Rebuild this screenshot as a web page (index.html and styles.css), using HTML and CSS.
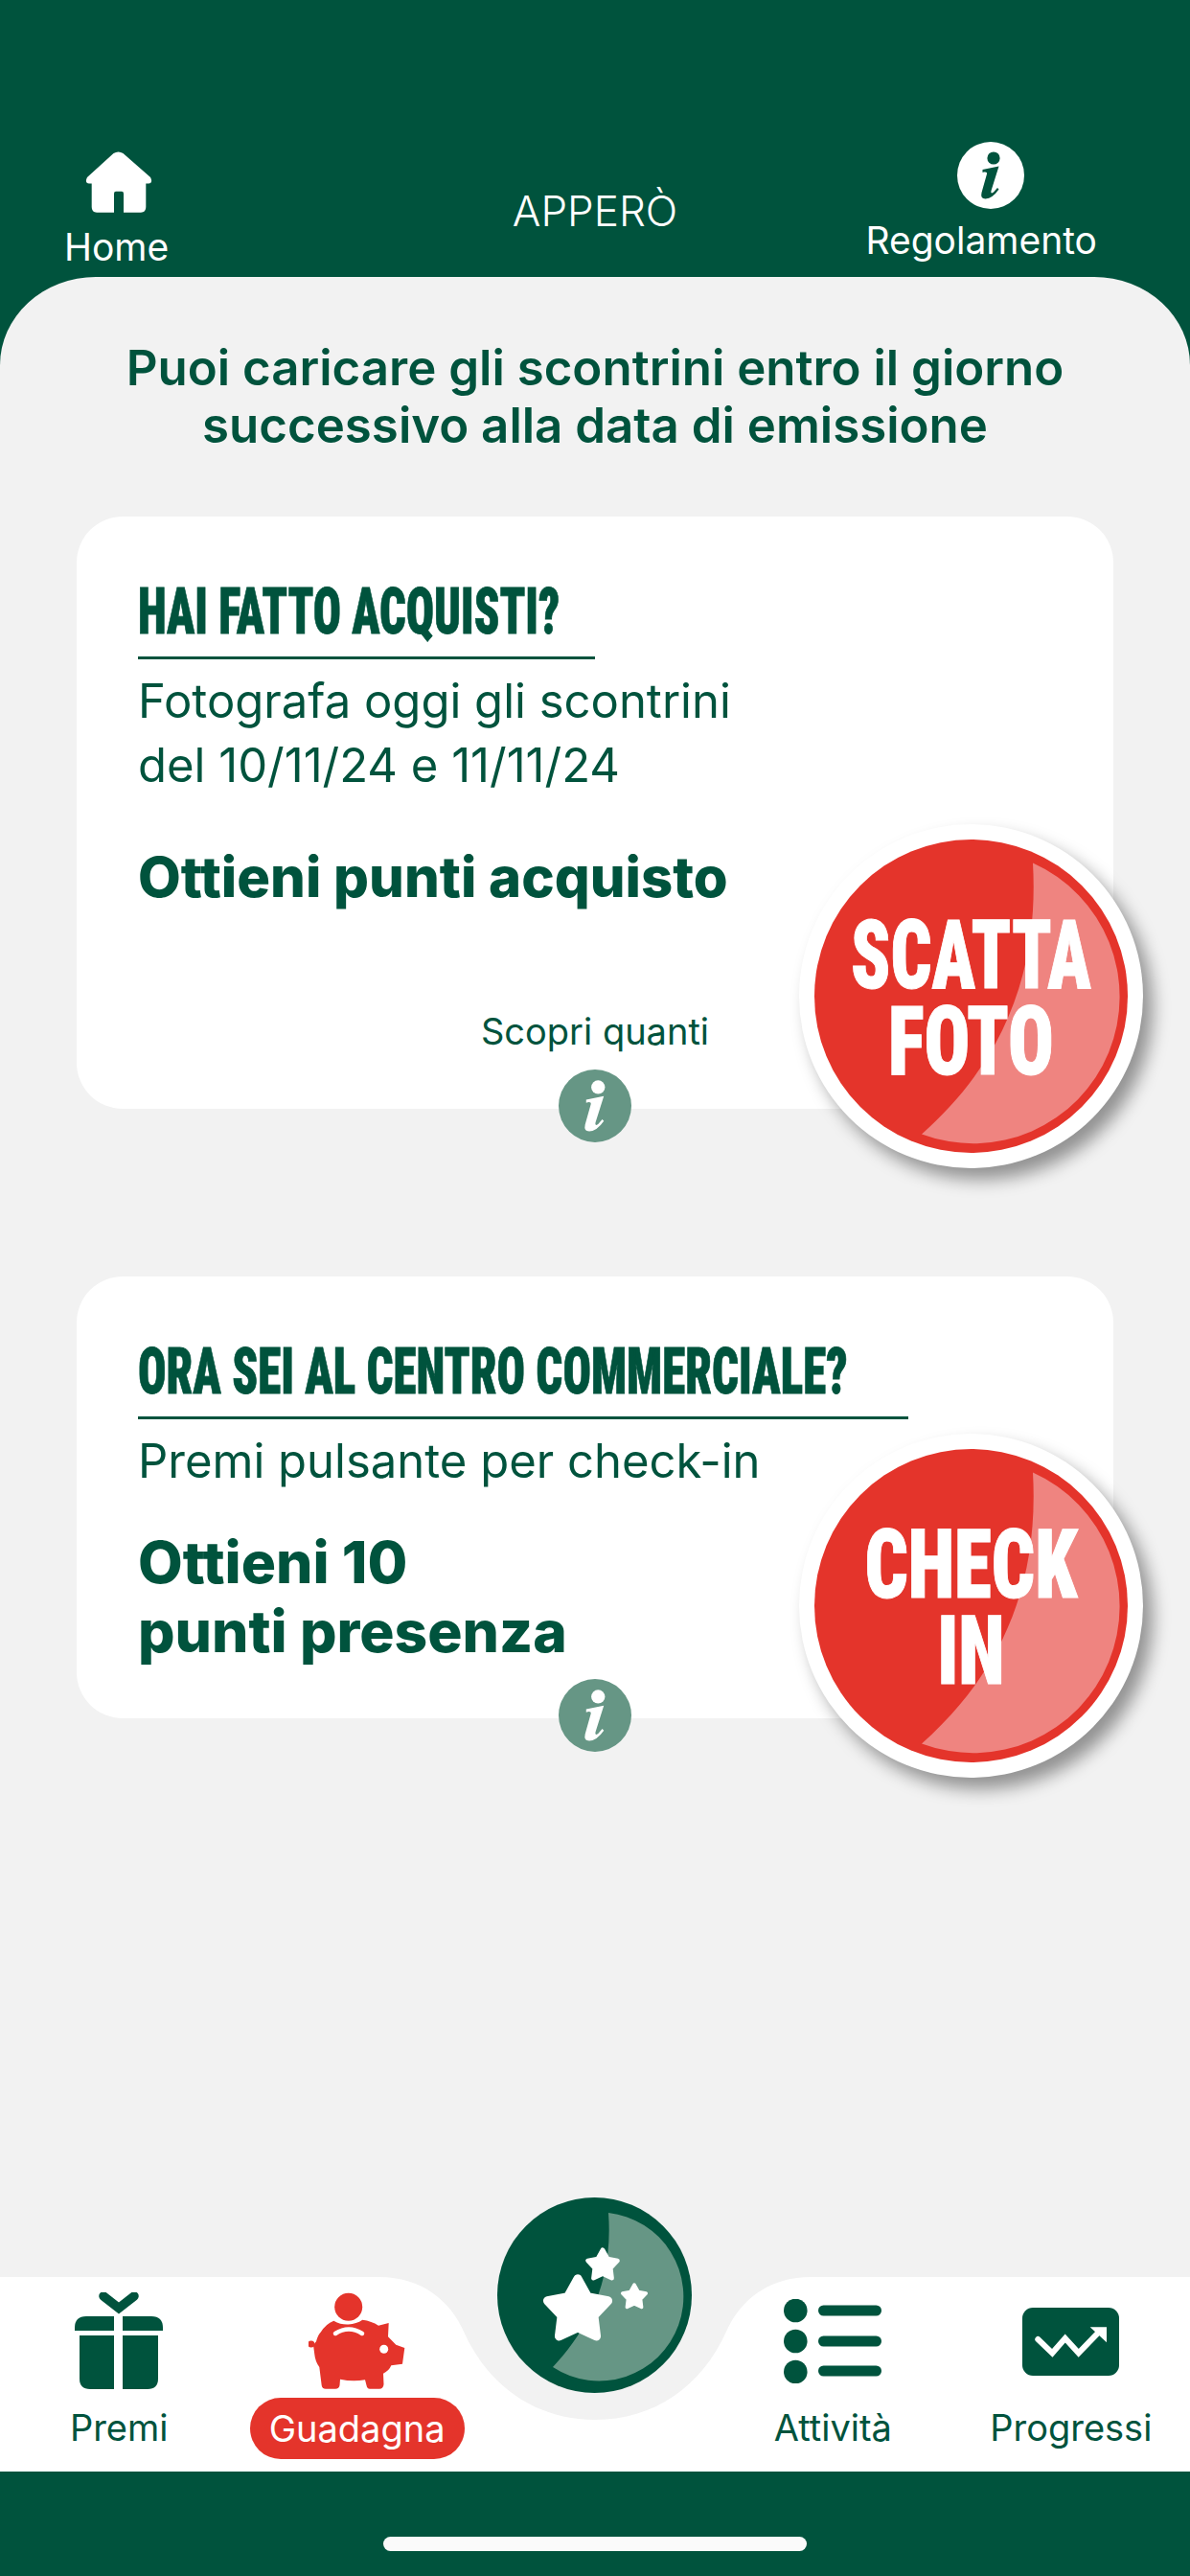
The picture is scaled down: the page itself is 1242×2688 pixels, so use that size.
FILE: index.html
```html
<!DOCTYPE html>
<html lang="it">
<head>
  <meta charset="UTF-8">
  <meta name="viewport" content="width=device-width, initial-scale=1.0">
  <title>Apperò</title>
  <link rel="stylesheet" href="styles.css">
</head>
<body>
  <svg class="sprites" width="0" height="0">
    <defs>
      <symbol id="info" viewBox="0 0 70 70">
        <circle cx="35" cy="35" r="35" fill="currentColor"/>
        <circle class="info-glyph" cx="38" cy="17" r="6.6"/>
        <path class="info-glyph" d="M26.5 29 L43.5 25.5 L35.5 51 Q34.5 55 38 52.5 L42 48 L43.5 49.5 Q37 59 29.5 59.5 Q24 59.5 25.5 53 L31 33.5 Q31.5 31 28 31.5 L26.5 32 Z"/>
      </symbol>
      <symbol id="gloss" viewBox="0 0 327 327">
        <path d="M228 24.5 A153 153 0 0 1 112 307.5 C176 250 236 165 228 24.5 Z" fill="#ef8480"/>
      </symbol>
      <polygon id="star" points="0,-8.6 2.7,-3.72 8.18,-2.66 4.37,1.42 5.05,6.96 0,4.6 -5.05,6.96 -4.37,1.42 -8.18,-2.66 -2.7,-3.72" fill="#fff" stroke="#fff" stroke-width="2.4" stroke-linejoin="round"/>
    </defs>
  </svg>

  <header class="topbar">
    <a class="top-link top-home">
      <svg class="home-icon" viewBox="0 0 70 64" width="70" height="64">
        <path fill="#fff" d="M29.5 2 Q34.5 -1 39.5 2 L68 27 Q71 33 66 33.5 L63.3 33.5 L63.3 58 Q63.3 63.7 58 63.7 L40 63.7 L40 44 Q40 41.7 38 41.7 L32 41.7 Q30 41.7 30 44 L30 63.7 L12 63.7 Q6.7 63.7 6.7 58 L6.7 33.5 L4 33.5 Q-1 33 2 27 Z"/>
      </svg>
      <span>Home</span>
    </a>
    <div class="top-title">APPERÒ</div>
    <a class="top-link top-rules">
      <svg class="info-head" width="70" height="70"><use href="#info"/></svg>
      <span>Regolamento</span>
    </a>
  </header>

  <main class="sheet">
    <p class="intro">Puoi caricare gli scontrini entro il giorno<br>successivo alla data di emissione</p>

    <section class="card">
      <h2 class="card-title title-short"><span class="condensed">HAI FATTO ACQUISTI?</span></h2>
      <p class="card-desc">Fotografa oggi gli scontrini<br>del 10/11/24 e 11/11/24</p>
      <p class="card-reward reward-wide">Ottieni punti acquisto</p>
      <p class="card-more">Scopri quanti</p>
      <svg class="info-card info-after-more" width="76" height="76"><use href="#info"/></svg>
      <div class="cta">
        <div class="cta-disc">
          <svg class="cta-gloss" width="327" height="327"><use href="#gloss"/></svg>
          <div class="cta-text"><span class="cta-tight">SCATTA</span><span>FOTO</span></div>
        </div>
      </div>
    </section>

    <section class="card card-next">
      <h2 class="card-title title-long"><span class="condensed">ORA SEI AL CENTRO COMMERCIALE?</span></h2>
      <p class="card-desc">Premi pulsante per check-in</p>
      <p class="card-reward">Ottieni 10<br>punti presenza</p>
      <svg class="info-card" width="76" height="76"><use href="#info"/></svg>
      <div class="cta">
        <div class="cta-disc">
          <svg class="cta-gloss" width="327" height="327"><use href="#gloss"/></svg>
          <div class="cta-text"><span>CHECK</span><span>IN</span></div>
        </div>
      </div>
    </section>
  </main>

  <nav class="tabbar">
    <svg class="notch" viewBox="0 0 1242 150" width="1242" height="150">
      <path fill="#f2f2f2" d="M396 0 C440 0 470 25 484 57 C510 115 560 149 621 149 C682 149 732 115 758 57 C772 25 802 0 846 0 Z"/>
    </svg>

    <a class="tab">
      <div class="tab-icon">
        <svg viewBox="0 0 92 102" width="92" height="102" fill="#00533d">
          <path d="M30 4 L46 16.5 L62 4" fill="none" stroke="#00533d" stroke-width="9.5" stroke-linecap="round"/>
          <path d="M41 25 V40 H0 V37 Q0 25 12 25 Z"/>
          <path d="M50 25 H80 Q92 25 92 37 V40 H50 Z"/>
          <path d="M5 45 H41 V101 H16 Q5 101 5 90 Z"/>
          <path d="M50 45 H87 V90 Q87 101 76 101 H50 Z"/>
        </svg>
      </div>
      <span class="tab-label">Premi</span>
    </a>

    <a class="tab">
      <div class="tab-icon">
        <svg viewBox="0 0 101 102" width="101" height="102" fill="#e4342b">
          <circle cx="41.7" cy="15.3" r="14.5"/>
          <circle cx="2.8" cy="54" r="3.6"/>
          <path d="M5 55 L8 51.3 Q10 44 13 41.3 Q18 33 26.3 29.7 Q34 34 41.7 33.5 Q50 33 56.3 28.7 Q66 30 73 34.7 L83.7 32 L83 46.3 L91.3 54.7 L100.3 58 L98 74.7 L86.3 76.3 Q84 82 78 84.7 L78.5 96 Q78 100.7 74 100.7 L64 100.7 Q61 100.7 60.5 97 L59 91.3 Q46 93.5 33 90.7 L32.5 97 Q32 100.7 28 100.7 L18 100.7 Q14 100.7 13.7 97 L11.3 78 Q7 72 6.3 64.7 Z"/>
          <path d="M28 43 Q42 34 56 43" fill="none" stroke="#fff" stroke-width="4.5" stroke-linecap="round"/>
          <circle cx="78.7" cy="59.3" r="4.5" fill="#fff"/>
        </svg>
      </div>
      <span class="tab-label tab-label-active">Guadagna</span>
    </a>

    <div class="fab">
      <svg viewBox="0 0 203 204" width="203" height="204">
        <path fill="#669685" d="M116 16 A88 88 0 1 1 58 177 C88 145 122 95 116 16 Z"/>
        <use href="#star" transform="translate(84 118) scale(3.85)"/>
        <use href="#star" transform="translate(110 71) scale(1.9)"/>
        <use href="#star" transform="translate(143 104) scale(1.5)"/>
      </svg>
    </div>

    <a class="tab">
      <div class="tab-icon">
        <svg viewBox="0 0 102 88" width="102" height="88" fill="#00533d">
          <circle cx="12.3" cy="12" r="12.3"/>
          <circle cx="12.3" cy="44" r="12.3"/>
          <circle cx="12.3" cy="76" r="12.3"/>
          <rect x="36" y="6.5" width="66" height="11" rx="5.5"/>
          <rect x="36" y="38.5" width="66" height="11" rx="5.5"/>
          <rect x="36" y="69.5" width="66" height="11" rx="5.5"/>
        </svg>
      </div>
      <span class="tab-label">Attività</span>
    </a>

    <a class="tab">
      <div class="tab-icon">
        <svg viewBox="0 0 101 71" width="101" height="71">
          <rect width="101" height="71" rx="11" fill="#00533d"/>
          <path d="M16.3 33 L31.3 47.3 L44.7 32 L58.7 47.3 L78 27.3" fill="none" stroke="#fff" stroke-width="6" stroke-linecap="round" stroke-linejoin="miter"/>
          <path d="M70.7 20.3 H88 V36.3 Z" fill="#fff"/>
        </svg>
      </div>
      <span class="tab-label">Progressi</span>
    </a>
  </nav>

  <footer class="homebar"><div class="homebar-pill"></div></footer>
</body>
</html>
```

FILE: styles.css
```css
* { box-sizing: border-box; }
html, body { margin: 0; padding: 0; }
body { width: 1242px; height: 2688px; background: #00533d; color: #00533d; font-family: Inter, "Noto Sans", sans-serif; display: flex; flex-direction: column; overflow: hidden; }
p, h2 { margin: 0; }
.sprites { position: absolute; }
.info-glyph { fill: var(--glyph); }

.topbar { height: 289px; display: grid; grid-template-columns: 1fr auto 1fr; align-items: end; color: #fff; }
.top-link { display: flex; flex-direction: column; font-size: 39px; line-height: 44px; }
.top-home { justify-self: start; padding: 0 0 9px 67px; gap: 14px; }
.top-home .home-icon { margin-left: 22px; }
.top-rules { justify-self: end; padding: 0 97px 16px 0; gap: 11px; }
.info-head { color: #fff; --glyph: #00533d; margin-left: 96px; }
.top-title { font-size: 44px; font-weight: 300; line-height: 54px; padding-bottom: 42px; }

.sheet { flex: 1; background: #f2f2f2; border-radius: 100px 100px 0 0 / 92px 92px 0 0; padding: 66px 80px 0; }
.intro { font-size: 51px; font-weight: 600; line-height: 60px; text-align: center; margin: -1px 0 65px; }

.card { position: relative; background: #fff; border-radius: 48px; padding: 65px 64px 0; display: flex; flex-direction: column; }
.card-next { margin-top: 175px; }
.card-title { font-family: Roboto, sans-serif; font-stretch: 75%; font-size: 66px; font-weight: 900; line-height: 70px; padding-bottom: 11px; border-bottom: 3px solid #00533d; white-space: nowrap; }
.condensed { display: inline-block; transform: scaleX(0.735); transform-origin: left center; -webkit-text-stroke: 0.8px #00533d; }
.title-short { width: 477px; }
.title-long { width: 804px; }
.title-long .condensed { transform: scaleX(0.742); }
.card-desc { font-size: 49px; font-weight: 400; line-height: 67px; margin-top: 10px; }
.card-reward { font-size: 60.5px; font-weight: 800; line-height: 72px; margin-top: 36px; }
.reward-wide { font-size: 58px; margin-top: 47px; }
.card-more { font-size: 38px; line-height: 44px; margin-top: 103px; text-align: center; }
.info-card { color: #669685; --glyph: #fff; align-self: center; margin: 14px 0 -35px; }
.info-after-more { margin-top: 18px; }

.cta { position: absolute; right: -31px; bottom: -62px; width: 359px; height: 359px; padding: 16px; background: #fff; border-radius: 50%; box-shadow: 10px 12px 18px rgba(0, 0, 0, 0.4); }
.cta-disc { position: relative; width: 327px; height: 327px; border-radius: 50%; background: #e4342b; display: flex; align-items: center; justify-content: center; }
.cta-gloss { position: absolute; left: 0; top: 0; }
.cta-text { position: relative; color: #fff; font-family: Roboto, sans-serif; font-stretch: 75%; font-size: 101px; font-weight: 900; line-height: 90px; text-align: center; margin-top: 4px; -webkit-text-stroke: 1px #fff; }
.cta-text span { display: block; transform: scaleX(0.785); }
.cta-text .cta-tight { transform: scaleX(0.745); }

.tabbar { position: relative; height: 203px; background: #fff; display: grid; grid-template-columns: repeat(5, 1fr); }
.notch { position: absolute; left: 0; top: 0; }
.fab { position: relative; justify-self: center; margin-top: -83px; width: 203px; height: 204px; border-radius: 50%; background: #00533d; }
.tab { position: relative; display: flex; flex-direction: column; align-items: center; }
.tab-icon { height: 134px; display: flex; align-items: center; justify-content: center; }
.tab-label { font-size: 38px; line-height: 44px; margin-top: 1px; }
.tab-label-active { background: #e4342b; color: #fff; border-radius: 32px; padding: 10px 20px; margin-top: -8px; }

.homebar { height: 109px; padding-top: 68px; display: flex; justify-content: center; }
.homebar-pill { width: 442px; height: 15px; background: #fafafa; border-radius: 8px; }
```
